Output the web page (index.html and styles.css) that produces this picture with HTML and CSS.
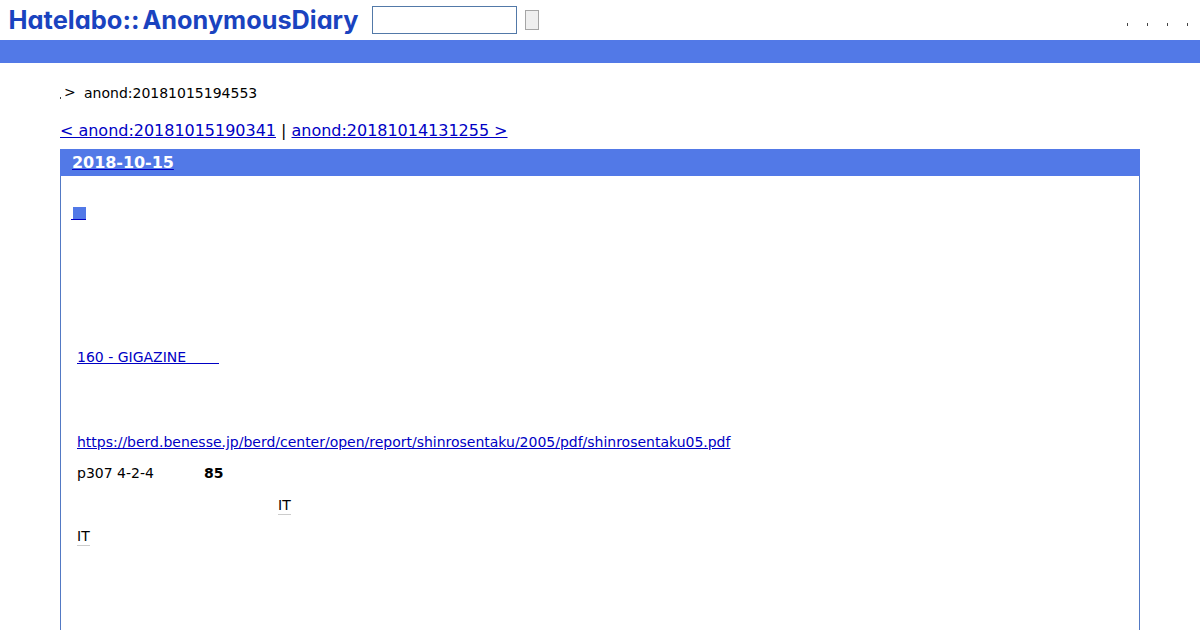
FILE: index.html
```html
<!DOCTYPE html>
<html lang="ja">

<head>
    <meta charset="UTF-8">
    <title>anond:20181015194553</title>
    <link rel="stylesheet" href="styles.css">
</head>

<body>
    <div class="header">
        <a class="logo" href="#">
            <svg width="362" height="40" viewBox="0 0 362 40">
                <text x="8.5" y="29" textLength="131" lengthAdjust="spacingAndGlyphs">Hatelabo::</text>
                <text x="142.5" y="29" textLength="216" lengthAdjust="spacingAndGlyphs">AnonymousDiary</text>
            </svg>
        </a>
        <form class="search">
            <input type="text" class="word">
            <button type="button" class="submit"></button>
        </form>
        <div class="menu">
            <i></i>
            <i></i>
            <i></i>
            <i></i>
        </div>
    </div>
    <div class="bar"></div>

    <div class="main">
        <div class="crumbs"><i></i><span class="arrow">&gt;</span><span>anond:20181015194553</span></div>
        <div class="pager"><a href="#">&lt; anond:20181015190341</a> | <a href="#">anond:20181014131255 &gt;</a></div>

        <div class="day">
            <h2><a href="#"><span>2018-10-15</span></a></h2>
            <div class="body">
                <h3><a href="#"><span class="mark"></span></a></h3>
                <div class="section">
                    <p class="gigazine"><a href="#">160 - GIGAZINE<span class="blank"></span></a></p>
                    <p class="source"><a href="#">https://berd.benesse.jp/berd/center/open/report/shinrosentaku/2005/pdf/shinrosentaku05.pdf</a></p>
                    <p class="result">p307 4-2-4<strong>85</strong></p>
                    <p class="indent"><a class="keyword" href="#">IT</a></p>
                    <p><a class="keyword" href="#">IT</a></p>
                </div>
            </div>
        </div>
    </div>
</body>

</html>
```
FILE: styles.css
```css
* {
    box-sizing: border-box;
}

body {
    margin: 0;
    height: 630px;
    overflow: hidden;
    display: flex;
    flex-direction: column;
    background: #fff;
    color: #000;
    font-family: "DejaVu Sans", sans-serif;
    font-size: 14px;
}

a {
    color: #0000c4;
}

/* header */
.header {
    display: flex;
    height: 40px;
}

.logo svg {
    display: block;
}

.logo text {
    font-family: Inter, Lato, sans-serif;
    font-size: 25px;
    font-weight: 700;
    font-feature-settings: "cv11";
    fill: #1a43bf;
}

.search {
    display: flex;
    align-items: center;
    gap: 8px;
    padding-left: 10px;
}

.word {
    width: 145px;
    height: 28px;
    padding: 0;
    border: 1px solid #5279a8;
    background: #fff;
}

.submit {
    width: 14px;
    height: 20px;
    padding: 0;
    border: 1px solid #a5a5a5;
    background: #efefef;
}

.menu {
    display: flex;
    gap: 19px;
    margin-left: auto;
    padding: 23px 12px 0 0;
}

.menu i,
.crumbs i {
    width: 1px;
    height: 3px;
    background: #444;
}

.bar {
    height: 23px;
    flex: none;
    background: #5279e7;
}

/* contents */
.main {
    flex: 1;
    display: flex;
    flex-direction: column;
    padding: 20px 60px 0;
}

.crumbs {
    display: flex;
    height: 20px;
    line-height: 20px;
}

.crumbs i {
    height: 2px;
    margin-top: 14px;
}

.arrow {
    width: 20px;
    margin: -1px 0 0 3px;
}

.pager {
    margin: 18px 0 8px;
    font-size: 16px;
    line-height: 20px;
    letter-spacing: -0.02px;
}

/* entry */
.day {
    flex: 1;
    border: 1px solid #5279c4;
    border-width: 0 1px;
}

.day h2 {
    height: 27px;
    margin: 0 -1px;
    padding-left: 12px;
    background: #5279e7;
    font-size: 16px;
    line-height: 27px;
    letter-spacing: -0.05px;
}

.day h2 span {
    color: #fff;
}

.body {
    padding: 31px 10px 0;
}

.day h3 {
    margin: 0;
    height: 13px;
}

.day h3 a {
    display: block;
    width: 15px;
    height: 13px;
    padding-left: 2px;
    border-bottom: 1px solid #0000c4;
}

.mark {
    display: block;
    width: 13px;
    height: 12px;
    background: #5279e7;
}

.section {
    padding: 127px 6px 0;
}

.section p {
    height: 20px;
    margin: 0 0 11px;
    line-height: 20px;
}

.section .gigazine {
    margin-bottom: 65px;
}

.blank {
    display: inline-block;
    width: 33px;
    height: 12px;
    border-bottom: 1px solid #0000c4;
    vertical-align: -2px;
}

.section .source {
    letter-spacing: -0.01px;
}

.section .result {
    margin-bottom: 12px;
}

.section strong {
    margin-left: 50px;
}

.section .indent {
    padding-left: 201px;
}

.keyword {
    display: inline-block;
    height: 20px;
    border-bottom: 1px solid #ccc;
    color: #000;
    text-decoration: none;
}
```
